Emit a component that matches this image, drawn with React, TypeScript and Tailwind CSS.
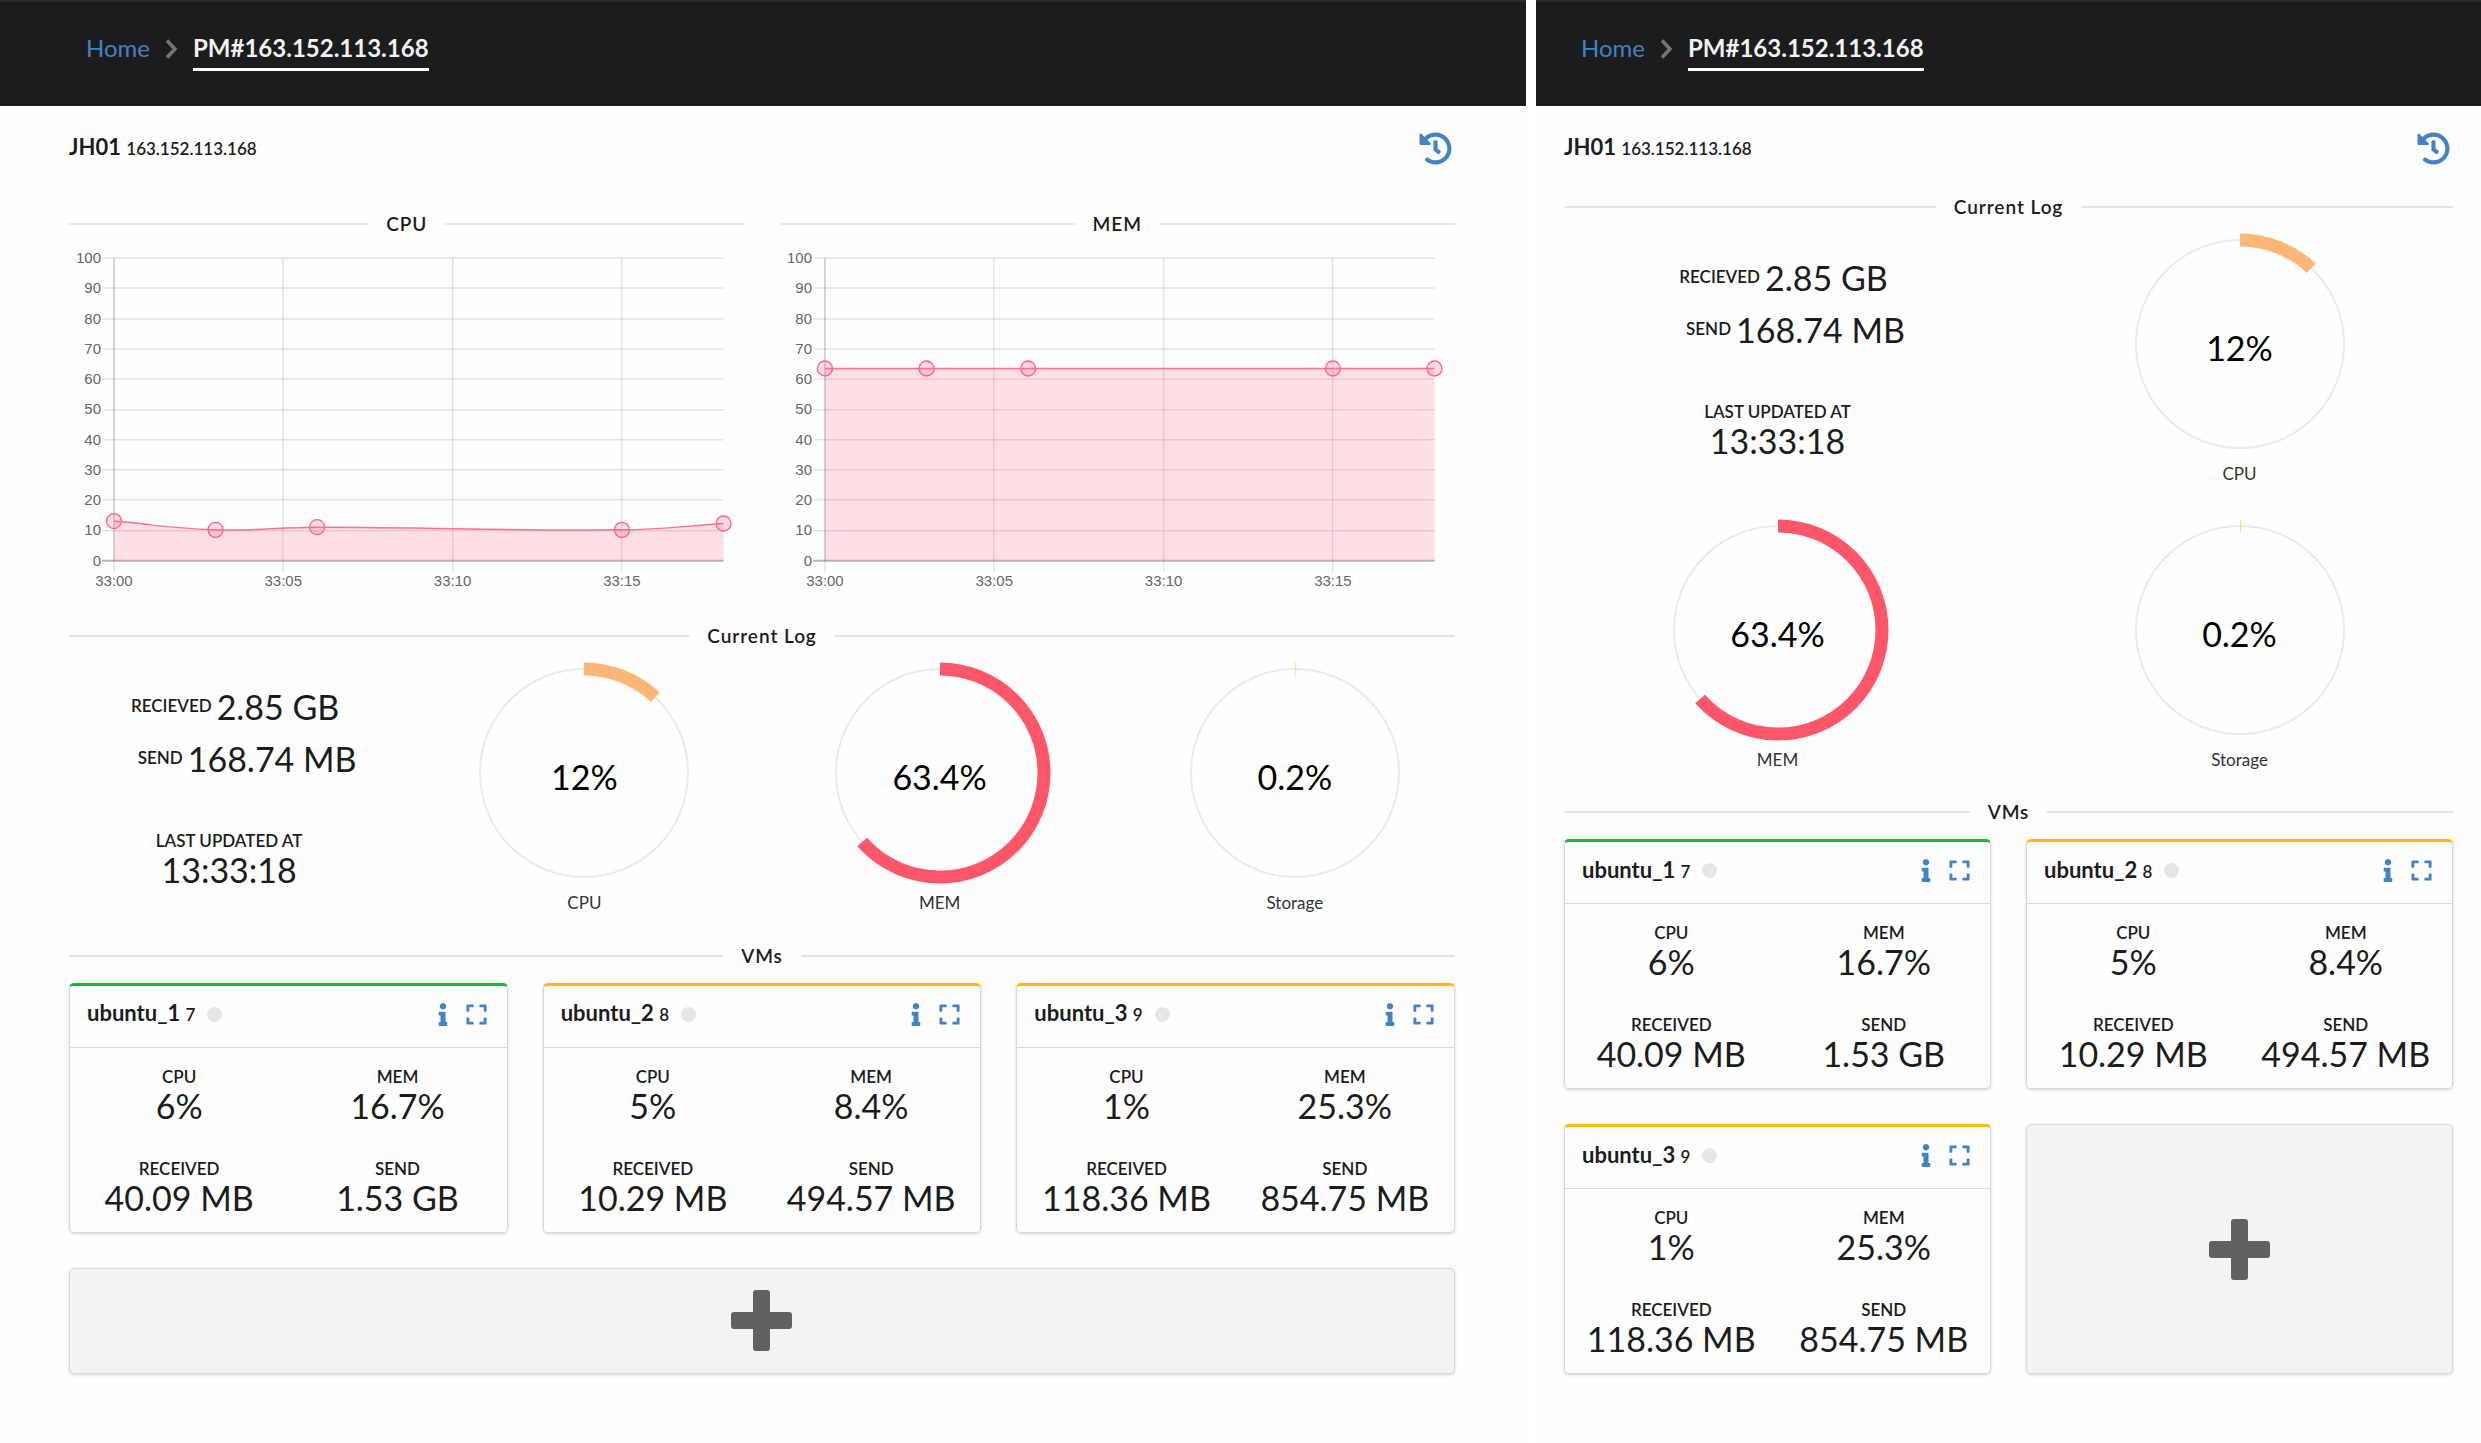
import React from "react";
import { FaExpand, FaHistory, FaInfo } from "react-icons/fa";

type Vm = {
  name: string;
  id: number;
  accent: string;
  cpu: string;
  mem: string;
  received: string;
  send: string;
};

const GREEN = "border-t-[#15b83f]";
const YELLOW = "border-t-[#fdbc0d]";

const VMS: Vm[] = [
  { name: "ubuntu_1", id: 7, accent: GREEN, cpu: "6%", mem: "16.7%", received: "40.09 MB", send: "1.53 GB" },
  { name: "ubuntu_2", id: 8, accent: YELLOW, cpu: "5%", mem: "8.4%", received: "10.29 MB", send: "494.57 MB" },
  { name: "ubuntu_3", id: 9, accent: YELLOW, cpu: "1%", mem: "25.3%", received: "118.36 MB", send: "854.75 MB" },
];

type Sample = { t: number; v: number };

const CPU_LOG: Sample[] = [
  { t: 0, v: 13.1 },
  { t: 3, v: 10.2 },
  { t: 6, v: 11.1 },
  { t: 15, v: 10.2 },
  { t: 18, v: 12.3 },
];
const MEM_LOG: Sample[] = CPU_LOG.map(({ t }) => ({ t, v: 63.5 }));

function Divider({ children }: { children: React.ReactNode }) {
  return (
    <div className="flex h-6 items-center gap-[18px]">
      <span className="h-[2px] flex-1 bg-[#e6e6e6]" />
      <h2 className="text-[19px] leading-[22px] font-semibold tracking-wider">{children}</h2>
      <span className="h-[2px] flex-1 bg-[#e6e6e6]" />
    </div>
  );
}

/* Smooth line through the points: Bezier handles with a tension of 0.4. */
function smoothPath(pts: { x: number; y: number }[]) {
  const tension = 0.4;
  const handles = pts.map((p, i) => {
    const prev = pts[i - 1] ?? p;
    const next = pts[i + 1] ?? p;
    const d01 = Math.hypot(p.x - prev.x, p.y - prev.y);
    const d12 = Math.hypot(next.x - p.x, next.y - p.y);
    const fa = (tension * d01) / (d01 + d12);
    const fb = (tension * d12) / (d01 + d12);
    return {
      before: { x: p.x - fa * (next.x - prev.x), y: p.y - fa * (next.y - prev.y) },
      after: { x: p.x + fb * (next.x - prev.x), y: p.y + fb * (next.y - prev.y) },
    };
  });
  return pts.reduce((d, p, i) => {
    if (i === 0) return `M${p.x},${p.y}`;
    const a = handles[i - 1].after;
    const b = handles[i].before;
    return `${d} C${a.x},${a.y} ${b.x},${b.y} ${p.x},${p.y}`;
  }, "");
}

function LineChart({ label, data }: { label: string; data: Sample[] }) {
  const left = 45;
  const right = 655;
  const top = 18;
  const bottom = 321;
  const x = (t: number) => left + ((right - left) * t) / 18;
  const y = (v: number) => bottom - ((bottom - top) * v) / 100;
  const pts = data.map((s) => ({ x: x(s.t), y: y(s.v) }));
  const line = smoothPath(pts);
  return (
    <svg viewBox="0 0 676 360" className="mt-1 block h-auto w-full" role="img" aria-label={`${label} usage over time`}>
      {Array.from({ length: 11 }, (_, i) => i * 10).map((v) => (
        <g key={v}>
          <line
            x1={left - 12}
            x2={right}
            y1={Math.round(y(v))}
            y2={Math.round(y(v))}
            stroke="#000"
            strokeOpacity={v === 0 ? 0.28 : 0.1}
            strokeWidth={v === 0 ? 2 : 1.5}
          />
          <text x={left - 13} y={y(v) + 5} textAnchor="end" className="fill-[#666] font-['Liberation_Sans',sans-serif] text-[15px]">
            {v}
          </text>
        </g>
      ))}
      {[0, 5, 10, 15].map((t) => (
        <g key={t}>
          <line
            x1={Math.round(x(t))}
            x2={Math.round(x(t))}
            y1={top}
            y2={bottom + 12}
            stroke="#000"
            strokeOpacity={0.1}
            strokeWidth={1.5}
          />
          <text x={x(t)} y={346} textAnchor="middle" className="fill-[#666] font-['Liberation_Sans',sans-serif] text-[15px]">
            {`33:${String(t).padStart(2, "0")}`}
          </text>
        </g>
      ))}
      <line x1={left} x2={left} y1={top} y2={bottom} stroke="#000" strokeOpacity={0.12} strokeWidth={1.5} />
      <path d={`${line} L${right},${bottom} L${left},${bottom} Z`} fill="#ff6384" fillOpacity={0.2} />
      <path d={line} fill="none" stroke="#ff6384" strokeOpacity={0.9} strokeWidth={1.5} />
      {pts.map((p) => (
        <circle key={p.x} cx={p.x} cy={p.y} r={7.5} fill="#ff6384" fillOpacity={0.22} stroke="#ff6384" strokeWidth={1.3} />
      ))}
    </svg>
  );
}

function Donut({ label, value, color }: { label: string; value: number; color: string }) {
  const r = 104;
  const length = 2 * Math.PI * r;
  return (
    <figure className="flex h-[286px] flex-col items-center pt-[14px]">
      <div className="relative">
        <svg width="222" height="222" viewBox="-111 -111 222 222" className="block" aria-hidden="true">
          <circle r={r} fill="none" stroke="#ebebeb" strokeWidth="2" />
          <circle
            r={r}
            fill="none"
            stroke={color}
            strokeWidth="13"
            strokeDasharray={`${(length * value) / 100} ${length}`}
            transform="rotate(-90)"
          />
        </svg>
        <span className="absolute inset-0 flex items-center justify-center pt-2 text-[34px] leading-9 text-black">
          {value}%
        </span>
      </div>
      <figcaption className="mt-[7px] text-[17px] leading-6 text-[#333]">{label}</figcaption>
    </figure>
  );
}

const LABEL = "text-[17px] font-semibold";
const VALUE = "text-[34px] leading-[34px]";

function Traffic() {
  return (
    <dl className="flex flex-col items-center pt-[42px]">
      <div className="flex h-[52px] gap-[5px] pl-3">
        <dt className={`${LABEL} leading-[31px]`}>RECIEVED</dt>
        <dd className={VALUE}>2.85 GB</dd>
      </div>
      <div className="flex h-[52px] gap-[5px] pl-9">
        <dt className={`${LABEL} leading-[31px]`}>SEND</dt>
        <dd className={VALUE}>168.74 MB</dd>
      </div>
      <div className="mt-[35px] text-center">
        <dt className={`${LABEL} leading-6`}>LAST UPDATED AT</dt>
        <dd className={VALUE}>13:33:18</dd>
      </div>
    </dl>
  );
}

function Gauges() {
  return (
    <>
      <Traffic />
      <Donut label="CPU" value={12} color="#ffb677" />
      <Donut label="MEM" value={63.4} color="#ff5769" />
      <Donut label="Storage" value={0.2} color="#fce38a" />
    </>
  );
}

function Stat({ label, value }: { label: string; value: string }) {
  return (
    <div className="text-center whitespace-nowrap">
      <dt className={`${LABEL} leading-6`}>{label}</dt>
      <dd className={VALUE}>{value}</dd>
    </div>
  );
}

const CARD = "rounded-[5px] border border-[#d9d9da] shadow-[0_1px_3px_0_#d4d4d5]";

function VmCard({ vm }: { vm: Vm }) {
  return (
    <article className={`${CARD} h-[250px] border-t-[3px] ${vm.accent}`}>
      <header className="flex h-[62px] items-center border-b border-[#dcdcdd] pr-[19px] pb-1 pl-[17px]">
        <h3 className="text-[22px] leading-7 font-bold">
          {vm.name} <small className="text-[17px] font-semibold">{vm.id}</small>
        </h3>
        <span className="ml-3 size-[15px] rounded-full bg-[#e6e6e6]" />
        <button type="button" aria-label={`Details of ${vm.name}`} className="ml-auto text-[#4183c4]">
          <FaInfo size={23} className="w-[12px]" />
        </button>
        <button type="button" aria-label={`Expand ${vm.name}`} className="ml-4 text-[#4183c4]">
          <FaExpand size={23} />
        </button>
      </header>
      <dl className="grid grid-cols-2 gap-y-[34px] pt-[17px]">
        <Stat label="CPU" value={vm.cpu} />
        <Stat label="MEM" value={vm.mem} />
        <Stat label="RECEIVED" value={vm.received} />
        <Stat label="SEND" value={vm.send} />
      </dl>
    </article>
  );
}

function AddVm({ className }: { className: string }) {
  return (
    <button type="button" aria-label="Add VM" className={`${CARD} flex items-center justify-center bg-[#f1f3f5] ${className}`}>
      <svg width="61" height="61" viewBox="0 0 61 61" fill="#616161" aria-hidden="true">
        <rect x="22" y="0" width="17" height="61" rx="3" />
        <rect x="0" y="22" width="61" height="17" rx="3" />
      </svg>
    </button>
  );
}

function TopBar({ className }: { className: string }) {
  return (
    <nav aria-label="Breadcrumb" className={`flex h-[106px] border-t-2 border-[#27292a] bg-[#1b1c1d] pt-6 text-[24px] ${className}`}>
      <a href="#home" className="h-11 leading-[43px] text-[#4183c4]">
        Home
      </a>
      <svg width="13" height="20" viewBox="0 0 13 20" className="mx-[15px] mt-[13px]" fill="none" stroke="#767676" strokeWidth="3.5" aria-hidden="true">
        <path d="M2 1.5 10 10 2 18.5" />
      </svg>
      <span aria-current="page" className="h-[45px] border-b-[3px] border-white leading-[43px] font-bold text-[#f2f2f2]">
        PM#163.152.113.168
      </span>
    </nav>
  );
}

function HostHeader() {
  return (
    <div className="flex h-[33px] justify-between pr-[3px]">
      <h1 className="text-[22px] leading-[30px] font-bold">
        JH01 <small className="text-[17px] font-semibold">163.152.113.168</small>
      </h1>
      <button type="button" aria-label="History" className="text-[#4183c4]">
        <FaHistory size={33} />
      </button>
    </div>
  );
}

export default function App() {
  return (
    <div className="grid min-h-screen grid-cols-[1526fr_945fr] gap-[10px] bg-white font-[Lato,sans-serif] text-[#1b1c1d]">
      <section className="min-w-0 bg-[#fefefe]">
        <TopBar className="pl-[86px]" />
        <main className="pt-[26px] pr-[71px] pb-16 pl-[69px]">
          <HostHeader />
          <div className="mt-[47px] grid grid-cols-2 gap-[35px]">
            <div>
              <Divider>CPU</Divider>
              <LineChart label="CPU" data={CPU_LOG} />
            </div>
            <div>
              <Divider>MEM</Divider>
              <LineChart label="MEM" data={MEM_LOG} />
            </div>
          </div>
          <div className="mt-6">
            <Divider>Current Log</Divider>
          </div>
          <div className="grid grid-cols-4 gap-[35px]">
            <Gauges />
          </div>
          <div className="mt-[10px]">
            <Divider>VMs</Divider>
          </div>
          <div className="mt-[15px] grid grid-cols-3 gap-[35px]">
            {VMS.map((vm) => (
              <VmCard key={vm.id} vm={vm} />
            ))}
            <AddVm className="col-span-3 h-[106px]" />
          </div>
        </main>
      </section>

      <section className="min-w-0 bg-[#fefefe]">
        <TopBar className="pl-[45px]" />
        <div className="px-7 pt-[26px] pb-16">
          <HostHeader />
          <div className="mt-[30px]">
            <Divider>Current Log</Divider>
          </div>
          <div className="grid grid-cols-2 gap-x-[35px]">
            <Gauges />
          </div>
          <div className="mt-[9px]">
            <Divider>VMs</Divider>
          </div>
          <div className="mt-[15px] grid grid-cols-2 gap-[35px]">
            {VMS.map((vm) => (
              <VmCard key={vm.id} vm={vm} />
            ))}
            <AddVm className="h-[250px]" />
          </div>
        </div>
      </section>
    </div>
  );
}
